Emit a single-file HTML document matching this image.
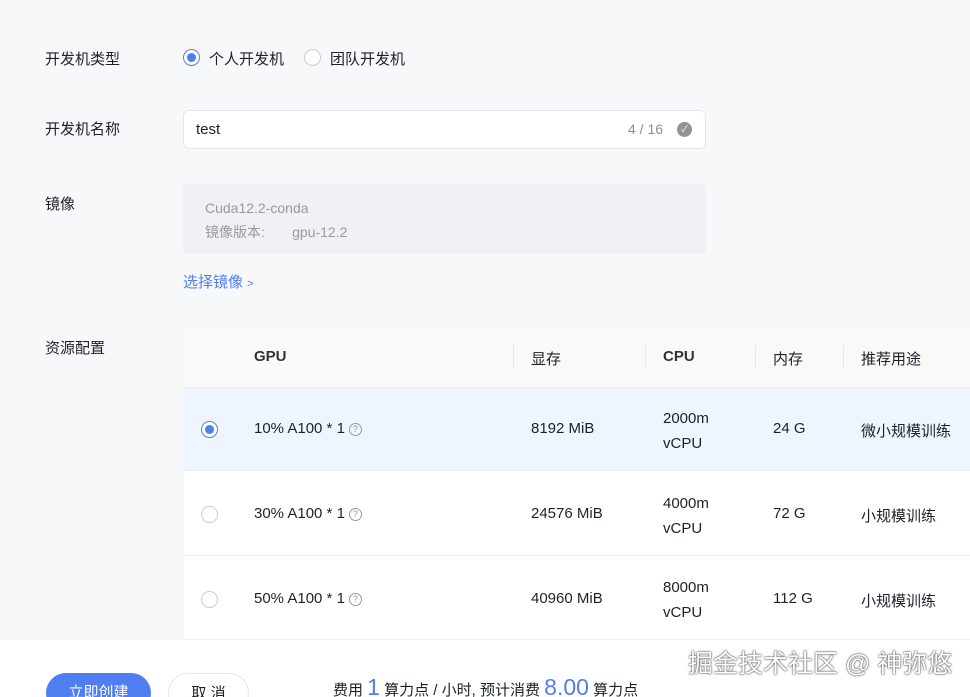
<!DOCTYPE html>
<html><head><meta charset="utf-8"><style>
*{margin:0;padding:0;box-sizing:border-box}
html{width:970px;height:697px;overflow:hidden}
body{width:970px;height:697px;overflow:hidden;background:#f7f8fa;font-family:"Liberation Sans","Noto Sans CJK SC",sans-serif;color:#1d2129;position:relative;font-size:15px}
.a{position:absolute;white-space:nowrap}
.lbl{left:45px;font-size:15px;color:#1d2129}
.radio{position:absolute;width:17px;height:17px;border-radius:50%;border:1px solid #c9cdd4;background:#fff}
.radio.on{border:1px solid #4e7ef0}
.radio.on::after{content:"";position:absolute;left:3px;top:3px;width:9px;height:9px;border-radius:50%;background:#4e7ef0}
.hdr{position:absolute;left:184px;top:326px;width:786px;height:62px;background:#faf9f8;border-bottom:1px solid #eee}
.row{position:absolute;left:184px;width:786px;border-bottom:1px solid #eeeeee}
.div{position:absolute;top:345px;width:1px;height:24px;background:#e5e6eb}
.q{display:inline-block;width:13px;height:13px;border:1px solid #999;border-radius:50%;font-size:9px;line-height:11px;text-align:center;color:#999;vertical-align:middle;margin-left:4px}
</style></head><body>
<div class="a lbl" style="top:48px">开发机类型</div>
<div class="radio on" style="left:183px;top:49px"></div>
<div class="a" style="left:209px;top:48px">个人开发机</div>
<div class="radio" style="left:304px;top:49px"></div>
<div class="a" style="left:330px;top:48px">团队开发机</div>

<div class="a lbl" style="top:118px">开发机名称</div>
<div class="a" style="left:183px;top:110px;width:523px;height:39px;background:#fff;border:1px solid #e5e6eb;border-radius:6px"></div>
<div class="a" style="left:196px;top:121px">test</div>
<div class="a" style="left:628px;top:121px;color:#86909c;font-size:14px">4 / 16</div>
<div class="a" style="left:677px;top:122px;width:15px;height:15px;border-radius:50%;background:#929292;color:#fff;font-size:9px;line-height:15px;text-align:center">✓</div>

<div class="a lbl" style="top:193px">镜像</div>
<div class="a" style="left:183px;top:184px;width:523px;height:70px;background:#f0f1f4;border-radius:3px"></div>
<div class="a" style="left:205px;top:200px;font-size:14px;color:#9a9a9a">Cuda12.2-conda</div>
<div class="a" style="left:205px;top:222px;font-size:14px;color:#9a9a9a">镜像版本:&nbsp;&nbsp;&nbsp;&nbsp;&nbsp;&nbsp;&nbsp;gpu-12.2</div>
<div class="a" style="left:183px;top:271px;color:#4e7ef0">选择镜像 <span style="font-size:11px">&gt;</span></div>

<div class="a lbl" style="top:337px">资源配置</div>
<div class="hdr"></div>
<div class="a" style="left:254px;top:348px;font-weight:bold;color:#333">GPU</div>
<div class="a" style="left:531px;top:348px">显存</div>
<div class="a" style="left:663px;top:348px;font-weight:bold;color:#333">CPU</div>
<div class="a" style="left:773px;top:348px">内存</div>
<div class="a" style="left:861px;top:348px">推荐用途</div>
<div class="div" style="left:513px"></div><div class="div" style="left:645px"></div><div class="div" style="left:755px"></div><div class="div" style="left:843px"></div>

<div class="row" style="top:388px;height:83px;background:#eef5fe"></div>
<div class="radio on" style="left:201px;top:421px"></div>
<div class="a" style="left:254px;top:420px">10% A100 * 1<span class="q">?</span></div>
<div class="a" style="left:531px;top:420px">8192 MiB</div>
<div class="a" style="left:663px;top:406px;line-height:25px">2000m<br>vCPU</div>
<div class="a" style="left:773px;top:420px">24 G</div>
<div class="a" style="left:861px;top:420px">微小规模训练</div>

<div class="row" style="top:471px;height:85px;background:#fff"></div>
<div class="radio" style="left:201px;top:506px"></div>
<div class="a" style="left:254px;top:505px">30% A100 * 1<span class="q">?</span></div>
<div class="a" style="left:531px;top:505px">24576 MiB</div>
<div class="a" style="left:663px;top:491px;line-height:25px">4000m<br>vCPU</div>
<div class="a" style="left:773px;top:505px">72 G</div>
<div class="a" style="left:861px;top:505px">小规模训练</div>

<div class="row" style="top:556px;height:84px;background:#fff"></div>
<div class="radio" style="left:201px;top:591px"></div>
<div class="a" style="left:254px;top:590px">50% A100 * 1<span class="q">?</span></div>
<div class="a" style="left:531px;top:590px">40960 MiB</div>
<div class="a" style="left:663px;top:575px;line-height:25px">8000m<br>vCPU</div>
<div class="a" style="left:773px;top:590px">112 G</div>
<div class="a" style="left:861px;top:590px">小规模训练</div>

<div class="a" style="left:0;top:640px;width:970px;height:57px;background:#fff"></div>
<div class="a" style="left:46px;top:673px;width:105px;height:40px;border-radius:20px;background:#4e7ef0;color:#fff;text-align:center;line-height:40px">立即创建</div>
<div class="a" style="left:168px;top:673px;width:81px;height:40px;border-radius:20px;background:#fff;border:1px solid #e5e6eb;text-align:center;line-height:40px">取 消</div>
<div class="a" style="left:333px;top:674px;font-size:15px">费用 <span style="color:#4e7ef0;font-size:23px">1</span> 算力点 / 小时, 预计消费 <span style="color:#4e7ef0;font-size:23px">8.00</span> 算力点</div>
<div class="a" style="left:688px;top:644px;font-size:25px;color:#fff;text-shadow:0 0 2px #444,0 0 1px #333">掘金技术社区 @ 神弥悠</div>
</body></html>
